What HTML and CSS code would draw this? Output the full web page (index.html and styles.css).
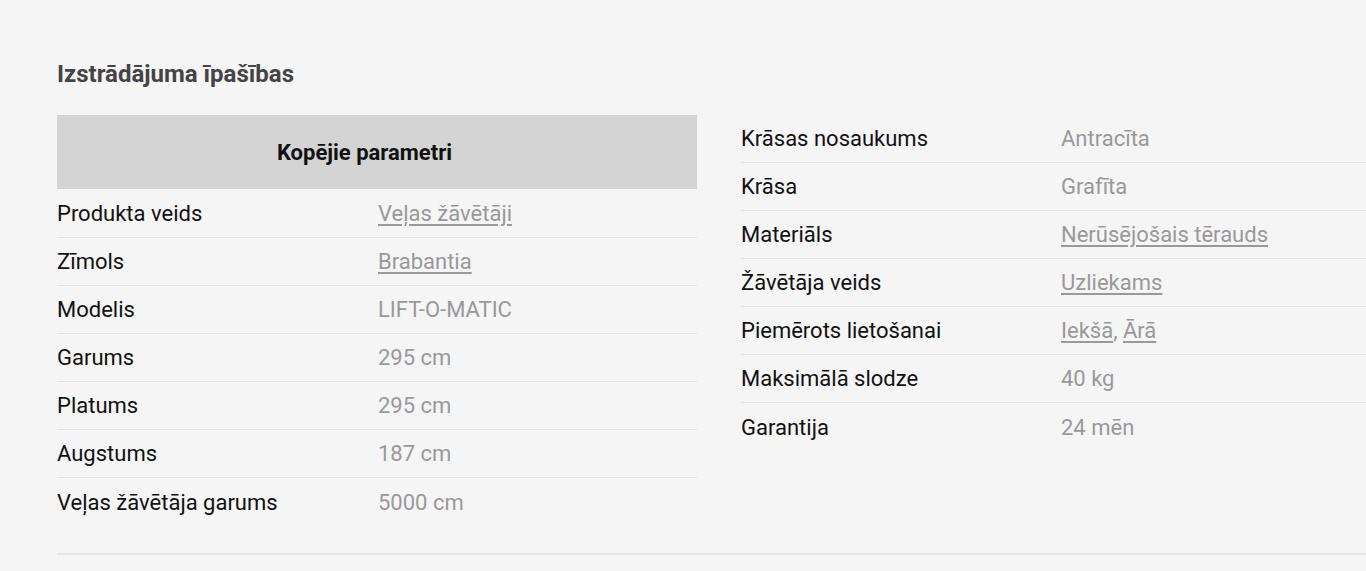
FILE: index.html
```html
<!DOCTYPE html>
<html lang="lv">
<head>
    <meta charset="UTF-8">
    <meta name="viewport" content="width=device-width, initial-scale=1.0">
    <title>Izstrādājuma īpašības</title>
    <link rel="stylesheet" href="styles.css">
</head>
<body>
    <section class="specs">
        <h2 class="specs-title">Izstrādājuma īpašības</h2>
        <div class="specs-columns">
            <div class="spec-group">
                <div class="spec-head">Kopējie parametri</div>
                <div class="spec-row"><span class="spec-label">Produkta veids</span><span class="spec-value"><a href="#">Veļas žāvētāji</a></span></div>
                <div class="spec-row"><span class="spec-label">Zīmols</span><span class="spec-value"><a href="#">Brabantia</a></span></div>
                <div class="spec-row"><span class="spec-label">Modelis</span><span class="spec-value">LIFT-O-MATIC</span></div>
                <div class="spec-row"><span class="spec-label">Garums</span><span class="spec-value">295 cm</span></div>
                <div class="spec-row"><span class="spec-label">Platums</span><span class="spec-value">295 cm</span></div>
                <div class="spec-row"><span class="spec-label">Augstums</span><span class="spec-value">187 cm</span></div>
                <div class="spec-row"><span class="spec-label">Veļas žāvētāja garums</span><span class="spec-value">5000 cm</span></div>
            </div>
            <div class="spec-group spec-group-side">
                <div class="spec-row"><span class="spec-label">Krāsas nosaukums</span><span class="spec-value">Antracīta</span></div>
                <div class="spec-row"><span class="spec-label">Krāsa</span><span class="spec-value">Grafīta</span></div>
                <div class="spec-row"><span class="spec-label">Materiāls</span><span class="spec-value"><a href="#">Nerūsējošais tērauds</a></span></div>
                <div class="spec-row"><span class="spec-label">Žāvētāja veids</span><span class="spec-value"><a href="#">Uzliekams</a></span></div>
                <div class="spec-row"><span class="spec-label">Piemērots lietošanai</span><span class="spec-value"><a href="#">Iekšā</a>, <a href="#">Ārā</a></span></div>
                <div class="spec-row"><span class="spec-label">Maksimālā slodze</span><span class="spec-value">40 kg</span></div>
                <div class="spec-row"><span class="spec-label">Garantija</span><span class="spec-value">24 mēn</span></div>
            </div>
        </div>
    </section>
</body>
</html>
```

FILE: styles.css
```css
/* Reset */
* {
    margin: 0;
    padding: 0;
    box-sizing: border-box;
}

body {
    font-family: 'Roboto', 'Liberation Sans', sans-serif;
    background: #f5f5f5;
    color: #111;
    overflow: hidden;
}

.specs {
    padding: 60px 0 0 57px;
    width: 1410px;
}

.specs-title {
    font-size: 24px;
    font-weight: 700;
    color: #444;
    line-height: 28px;
    margin-bottom: 27px;
}

.specs-columns {
    display: grid;
    grid-template-columns: 640px 640px;
    gap: 44px;
    padding-bottom: 27px;
    border-bottom: 2px solid #e6e6e6;
}

.spec-head {
    background: #d4d4d4;
    height: 74px;
    display: flex;
    align-items: center;
    justify-content: center;
    padding-right: 25px;
    font-weight: 700;
    font-size: 22px;
    margin-bottom: 1px;
}

.spec-row {
    display: grid;
    grid-template-columns: 321px 1fr;
    align-items: center;
    height: 48px;
    font-size: 22px;
    border-bottom: 1px solid #e2e2e2;
}

.spec-group-side .spec-row {
    grid-template-columns: 320px 1fr;
}

.spec-row:last-child {
    border-bottom: none;
}

.spec-value {
    color: #999;
}

.spec-value a {
    color: #999;
    text-decoration: underline;
    text-underline-offset: 3px;
}
```
